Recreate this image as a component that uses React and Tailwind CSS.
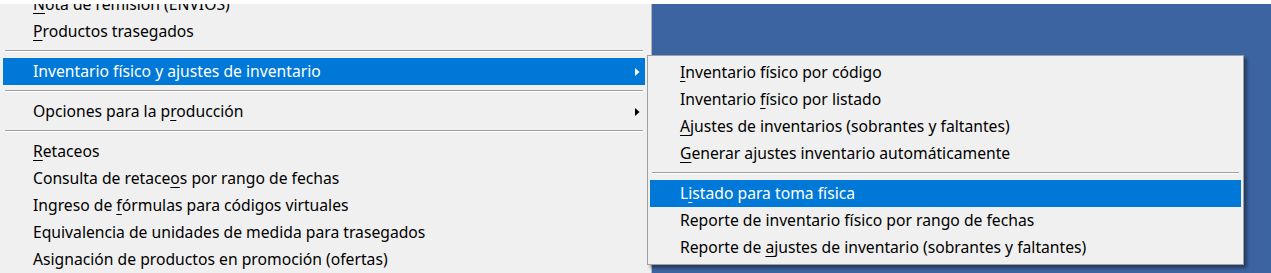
import React from 'react';

const mainItems = [
  { label: '&Nota de remisión (ENVIOS)' },
  { label: '&Productos trasegados' },
  { sep: true },
  { label: 'Inventario físico y ajustes de inventario', sub: true, active: true },
  { sep: true },
  { label: 'Opciones para la p&roducción', sub: true },
  { sep: true },
  { label: '&Retaceos' },
  { label: 'Consulta de retace&os por rango de fechas' },
  { label: 'Ingreso de &fórmulas para códigos virtuales' },
  { label: 'Equivalencia de unidades de medida para trasegados' },
  { label: 'Asignación de productos en promoción (ofertas)' },
];

const subItems = [
  { label: '&Inventario físico por código' },
  { label: 'Inventario &físico por listado' },
  { label: '&Ajustes de inventarios (sobrantes y faltantes)' },
  { label: '&Generar ajustes inventario automáticamente' },
  { sep: true },
  { label: 'L&istado para toma física', active: true },
  { label: 'Reporte de inventario físico por rango de fechas' },
  { label: 'Reporte de &ajustes de inventario (sobrantes y faltantes)' },
];

// "&x" marks the access key, like a Win32 menu resource
const Label = ({ text }) => {
  const i = text.indexOf('&');
  if (i < 0) return <span>{text}</span>;
  return (
    <span>
      {text.slice(0, i)}
      <u className="underline-offset-[3px] decoration-1">{text[i + 1]}</u>
      {text.slice(i + 2)}
    </span>
  );
};

const Arrow = ({ white }) => (
  <svg width="5" height="8" viewBox="0 0 5 8" className="absolute right-[5px] top-[10px]">
    <polygon points="0,0 4.5,4 0,8" fill={white ? '#ffffff' : '#000000'} />
  </svg>
);

const MenuList = ({ items }) =>
  items.map((it, i) =>
    it.sep ? (
      <div key={i} className="h-[13px] pt-[5px] pl-[2px] pr-[2px]">
        <div className="h-px bg-[#a0a0a0]" />
        <div className="h-px bg-white" />
      </div>
    ) : (
      <div
        key={i}
        className={`relative h-[27px] pl-[30px] flex items-center whitespace-nowrap ${
          it.active ? 'bg-[#0078d7] text-white' : 'text-black'
        }`}
      >
        <Label text={it.label} />
        {it.sub && <Arrow white={it.active} />}
      </div>
    )
  );

export default function App() {
  return (
    <div
      className="relative w-[1271px] h-[273px] overflow-hidden bg-[#3c64a0] text-[15.7px] leading-none"
      style={{ fontFamily: '"Noto Sans", "Open Sans", sans-serif' }}
    >
      <div className="relative z-10 h-[4px] bg-white" />
      <div className="flex h-[269px] overflow-hidden">
        <div className="w-[652px] shrink-0 bg-[#f0f0f0] border-r border-[#b5b5b5]">
          <div className="-mt-[13px] pl-[3px] pr-[6px]">
            <MenuList items={mainItems} />
          </div>
        </div>
        <div className="flex-1" />
      </div>

      <div className="absolute left-[647px] top-[55px] w-[597px] bg-[#f0f0f0] border border-[#a0a0a0] px-[2px] pt-[3px] pb-[3px] shadow-[3px_3px_3px_rgba(0,0,0,0.4)]">
        <MenuList items={subItems} />
      </div>
    </div>
  );
}
